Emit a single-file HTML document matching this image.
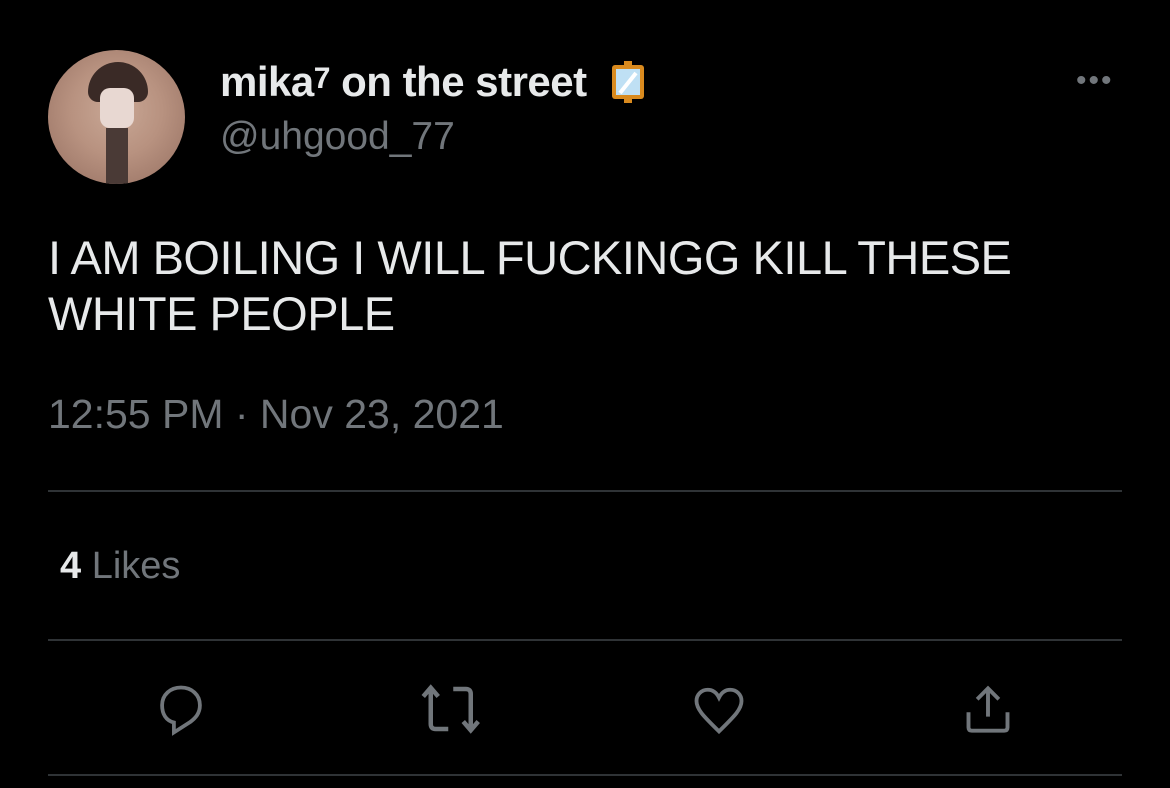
<!DOCTYPE html>
<html><head><meta charset="utf-8"><style>
html,body{margin:0;padding:0;background:#000;width:1170px;height:788px;overflow:hidden;font-family:"Liberation Sans",sans-serif}
.abs{position:absolute;white-space:nowrap}
.line{position:absolute;left:48px;width:1074px;height:2px;background:#2f3336}
</style></head><body>
<div class="abs" style="left:48px;top:50px;width:137px;height:134px;border-radius:50%;overflow:hidden;background:radial-gradient(circle at 50% 45%,#c9a896 0%,#b89280 45%,#a47e6e 75%,#8a6a60 100%)">
  <div class="abs" style="left:40px;top:12px;width:60px;height:40px;border-radius:30px 30px 10px 10px;background:#3a2a26"></div>
  <div class="abs" style="left:52px;top:38px;width:34px;height:40px;border-radius:10px;background:#e8d8d2"></div>
  <div class="abs" style="left:58px;top:78px;width:22px;height:56px;background:#4a3a36"></div>
</div>
<div class="abs" style="left:220px;top:58px;font-size:42px;font-weight:bold;color:#e7e9ea;letter-spacing:-0.5px">mika<span style="font-size:30px;vertical-align:8px">7</span> on the street</div>
<svg class="abs" style="left:609px;top:61px" width="38" height="42" viewBox="0 0 38 42"><rect x="3" y="4" width="32" height="34" rx="3" fill="#d98a1e"/><rect x="7" y="8" width="24" height="26" fill="#bfe0f4"/><path d="M11 32 L27 12" stroke="#fff" stroke-width="4"/><rect x="15" y="0" width="8" height="5" fill="#d98a1e"/><rect x="15" y="37" width="8" height="5" fill="#d98a1e"/></svg>
<div class="abs" style="left:1076px;top:64px;font-size:30px;color:#71767b;letter-spacing:2px">•••</div>
<div class="abs" style="left:220px;top:115px;font-size:39px;color:#71767b">@uhgood_77</div>
<div class="abs" style="left:48px;top:230px;font-size:47px;line-height:56px;color:#e7e9ea;letter-spacing:-0.5px">I AM BOILING I WILL FUCKINGG KILL THESE<br>WHITE PEOPLE</div>
<div class="abs" style="left:48px;top:391px;font-size:41px;color:#71767b">12:55 PM · Nov 23, 2021</div>
<div class="line" style="top:490px"></div>
<div class="abs" style="left:60px;top:545px;font-size:38px;color:#71767b"><b style="color:#e7e9ea">4</b> Likes</div>
<div class="line" style="top:639px"></div>
<svg class="abs" style="left:152px;top:684px" width="58" height="52" viewBox="0 0 24 22" fill="none" stroke="#71767b" stroke-width="1.6"><path d="M9 20.5 L9 16.3 C5.5 15.5 4 12.5 4 9 C4 4.5 7.5 1.5 12 1.5 C16.5 1.5 20 4.5 20 9 C20 12.5 18 14.5 16 16 Z"/></svg>
<svg class="abs" style="left:418px;top:684px" width="68" height="50" viewBox="0 0 27 20" fill="none" stroke="#71767b" stroke-width="1.8"><path d="M2 5 L5 1.5 L8 5 M5 2 L5 16 Q5 18 7 18 L12 18"/><path d="M14 2 L19 2 Q21 2 21 4 L21 18 M18 15 L21 18.5 L24 15"/></svg>
<svg class="abs" style="left:692px;top:686px" width="54" height="48" viewBox="0 0 24 21" fill="none" stroke="#71767b" stroke-width="1.7"><path d="M12 20 C6 14 2 10.5 2 6.5 C2 3.5 4.3 1.5 7 1.5 C9.3 1.5 11 3 12 5 C13 3 14.7 1.5 17 1.5 C19.7 1.5 22 3.5 22 6.5 C22 10.5 18 14 12 20 Z"/></svg>
<svg class="abs" style="left:962px;top:684px" width="52" height="50" viewBox="0 0 24 23" fill="none" stroke="#71767b" stroke-width="1.8"><path d="M12 15 L12 2 M7 7 L12 2 L17 7"/><path d="M3 13 L3 20 Q3 21.5 4.5 21.5 L19.5 21.5 Q21 21.5 21 20 L21 13"/></svg>
<div class="line" style="top:774px"></div>
</body></html>
